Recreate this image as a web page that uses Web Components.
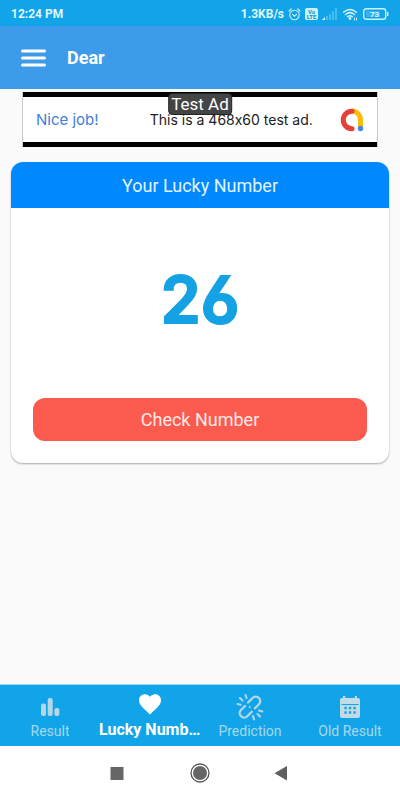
<!DOCTYPE html>
<html lang="en">
<head>
<meta charset="utf-8">
<meta name="viewport" content="width=device-width, initial-scale=1">
<title>Dear</title>
<style>
html, body { margin: 0; height: 100%; }
body { font-family: Roboto, "Liberation Sans", sans-serif; background: #fafafa; }
</style>
</head>
<body>
<lucky-app></lucky-app>

<template id="status-bar">
<style>
:host { display: flex; align-items: center; justify-content: space-between; height: 26px; padding: 2px 11px 0 11px; box-sizing: border-box; background: #12a4e8; color: #dff8ff; font-size: 12px; line-height: 16px; font-weight: 700; }
.right { display: flex; align-items: center; gap: 4px; }
svg { display: block; }
</style>
<span>12:24 PM</span>
<div class="right">
<span>1.3KB/s</span>
<svg width="13" height="13" viewBox="0 0 13 13" fill="none" stroke="#c9f3fc" stroke-linecap="round"><circle cx="6.500" cy="7" r="4.700" stroke-width="1.100"/><path d="M1 3.200 3.200 1M12 3.200 9.800 1M4.500 6.500l2 1.700 2-1.700" stroke-width="1.200"/></svg>
<svg width="13" height="12" viewBox="0 0 13 12"><rect width="13" height="12" rx="2" fill="#c9f3fc"/><g fill="#1693c8" font-family="Roboto, sans-serif" font-weight="700" font-size="6" text-anchor="middle"><text x="6.500" y="5.500">Vo</text><text x="6.500" y="11">LTE</text></g></svg>
<svg width="16" height="12" viewBox="0 0 16 12"><path d="M0 12 3 9v3z" fill="#dff8ff"/><path d="M4 8h2v4H4zM7 6h2v6H7zM10 3h2v9h-2zM13 0h2v12h-2z" fill="#45bcee"/></svg>
<svg width="17" height="13" viewBox="0 0 17 13" fill="none" stroke="#c9f3fc" stroke-width="1.500" stroke-linecap="round"><path d="M1.500 4.200q6.500-5.500 13 0M3.500 6.500q4.500-3.800 9 0M5.700 8.600q2.300-1.800 4.600 0"/><circle cx="8" cy="10.500" r=".7" fill="#c9f3fc"/><path d="M12.500 10v2M14.500 10v2" stroke-width="1"/></svg>
<svg width="26" height="12" viewBox="0 0 26 12"><rect x=".7" y=".7" width="22" height="10.600" rx="2.500" fill="none" stroke="#c9f3fc" stroke-width="1.400"/><path d="M3 3h14v6H3z" fill="#38b2e8"/><path d="M24.700 4v4" stroke="#c9f3fc" stroke-width="1.500"/><text x="11.500" y="9" font-family="Roboto, sans-serif" font-size="8" font-weight="700" fill="#dff8ff" text-anchor="middle">73</text></svg>
</div>
</template>

<template id="app-bar">
<style>
:host { display: flex; align-items: center; gap: 20px; height: 63px; padding: 0 20px; box-sizing: border-box; background: #3e9bea; color: #fff; }
button { border: 0; padding: 0; background: none; display: block; }
svg { display: block; }
h1 { margin: 0; font-size: 18px; line-height: 24px; font-weight: 700; }
</style>
<button type="button" aria-label="Menu"><svg width="27" height="20" viewBox="0 0 27 20" stroke="#fff" stroke-width="3" stroke-linecap="round"><path d="M2.500 3h22M2.500 10h22M2.500 17h22"/></svg></button>
<h1><slot></slot></h1>
</template>

<template id="ad-banner">
<style>
:host { display: flex; position: relative; align-items: center; justify-content: space-between; height: 55px; margin: 3px 22px 0; padding: 0 13px; box-sizing: border-box; border: 1px solid #ccc; border-width: 0 1px; background: linear-gradient(#000 5px, #fff 5px, #fff 50px, #000 50px); font-family: Inter, Roboto, sans-serif; font-feature-settings: "calt" 0; font-size: 14px; line-height: 20px; color: #222; }
a { color: #4280d8; text-decoration: none; font-size: 15px; }
.tag { position: absolute; top: 1px; left: 50%; transform: translateX(-50%); padding: 0 2px; border-radius: 4px; border: 1px solid #222; background: #444; color: #fff; font-family: Roboto, sans-serif; font-size: 17px; line-height: 20px; white-space: nowrap; }
.text { margin-left: 24px; }
svg { display: block; }
</style>
<a href="#">Nice job!</a>
<span class="text">This is a 468x60 test ad.</span>
<svg width="24" height="24" viewBox="0 0 24 24" fill="none" stroke-width="5"><path d="M12 3a9 9 0 0 1 8.500 9v8" stroke="#fbbc04"/><path d="M12 3.200a8.600 8.600 0 0 0 0 17.500" stroke="#e34234" stroke-linecap="round"/><circle cx="20.500" cy="20.500" r="2.700" fill="#4285f4"/></svg>
<span class="tag">Test Ad</span>
</template>

<template id="lucky-card">
<style>
:host { display: block; margin: 15px 11px 0; border-radius: 12px; overflow: hidden; background: #fff; box-shadow: 0 1px 2px #0005; }
h2 { margin: 0; background: #0088fe; color: #e2f5ff; font-size: 18px; line-height: 48px; height: 46px; font-weight: 400; text-align: center; }
output { display: block; padding: 45px 0 51px; text-align: center; color: #14a2e4; font: 600 64px/94px Inter, Roboto, sans-serif; font-feature-settings: "ss01" 1; -webkit-text-stroke: 2px #14a2e4; stroke-linejoin: round; }
.action { padding: 0 22px 22px; }
</style>
<h2>Your Lucky Number</h2>
<output>26</output>
<div class="action"><slot></slot></div>
</template>

<template id="action-button">
<style>
:host { display: block; }
button { display: block; width: 100%; height: 43px; border: 0; border-radius: 12px; background: #fb5a4f; color: #ffe9e5; font: 400 18px/24px Roboto, sans-serif; }
</style>
<button type="button"><slot></slot></button>
</template>

<template id="tab-bar">
<style>
:host { display: grid; grid-template-columns: repeat(4, minmax(0, 1fr)); height: 62px; background: #12a4e8; border-top: 1px solid #8fd6f4; box-sizing: border-box; }
</style>
<slot></slot>
</template>

<template id="tab-item">
<style>
:host { display: block; color: #a5d8ef; }
:host([active]) { color: #fff; }
a { display: flex; flex-direction: column; align-items: center; padding-top: 8px; color: inherit; text-decoration: none; font-size: 14px; line-height: 20px; }
.icon { height: 28px; display: flex; align-items: center; }
.label { white-space: nowrap; max-width: calc(100% + 2px); overflow: hidden; text-overflow: ellipsis; }
:host([active]) a { font-size: 16px; font-weight: 700; padding-top: 5px; line-height: 24px; }
</style>
<a href="#"><span class="icon"><slot name="icon"></slot></span><span class="label"><slot></slot></span></a>
</template>

<template id="system-nav">
<style>
:host { display: flex; align-items: center; justify-content: center; gap: 60px; height: 54px; background: #fff; }
button { display: block; border: 0; padding: 0; background: none; }
svg { display: block; }
</style>
<button type="button" aria-label="Recent apps"><svg width="24" height="24" viewBox="0 0 24 24"><path d="M5.500 6h13v13h-13z" fill="#666"/></svg></button>
<button type="button" aria-label="Home"><svg width="22" height="22" viewBox="0 0 22 22"><circle cx="11" cy="11" r="9" fill="none" stroke="#555" stroke-width="1.300"/><circle cx="11" cy="11" r="7" fill="#666"/></svg></button>
<button type="button" aria-label="Back"><svg width="24" height="24" viewBox="0 0 24 24"><path d="M3.500 12.200 16 5v14.500z" fill="#5f5f5f"/></svg></button>
</template>

<template id="lucky-app">
<style>
:host { display: flex; flex-direction: column; min-height: 100vh; }
main { flex: 1; }
svg { display: block; }
</style>
<status-bar></status-bar>
<app-bar>Dear</app-bar>
<main>
<ad-banner></ad-banner>
<lucky-card><action-button>Check Number</action-button></lucky-card>
</main>
<tab-bar>
<tab-item>Result<svg slot="icon" width="24" height="24" viewBox="0 0 24 24" fill="#b4d7e8"><rect x="3" y="8.500" width="5" height="12.500" rx="2"/><rect x="9.700" y="3" width="5" height="18" rx="2"/><rect x="16.400" y="13" width="5" height="8" rx="2"/></svg></tab-item>
<tab-item active>Lucky Number<svg slot="icon" width="24" height="24" viewBox="0 0 24 24" fill="#fff"><path d="M12 22.500 10.500 21C4.500 15.500 1 12.300 1 8.200 1 4.900 3.600 2.300 6.900 2.300c2 0 3.900.9 5.100 2.500 1.200-1.600 3.100-2.500 5.100-2.500C20.400 2.300 23 4.900 23 8.200c0 4.100-3.500 7.300-9.500 12.800z"/></svg></tab-item>
<tab-item>Prediction<svg slot="icon" width="28" height="28" viewBox="0 0 28 28" fill="none" stroke="#b4d7e8" stroke-width="2.300" stroke-linecap="round" stroke-linejoin="round"><path d="m12 9.500 4.500-4.500a4.400 4.400 0 0 1 6.500 6.200l-4 4M9 13l-4 4a4.400 4.400 0 0 0 6.300 6.200l4.500-4.500"/><path d="M13.700 14v.1M9.500 2l1 3M4 5l2.500 2.500M1.500 11l3 .8M17 23l1 3.500M21.500 21l2.500 2.500M23 17.500l3.300 1" stroke-width="2.100"/></svg></tab-item>
<tab-item>Old Result<svg slot="icon" width="24" height="28" viewBox="0 0 24 28"><path fill="#c2dbe7" d="M5 3h2.200v2h9.600V3H19v2h1q2 0 2 2v16q0 2-2 2H4q-2 0-2-2V7q0-2 2-2h1z"/><path stroke="#12a4e8" stroke-width="2.300" stroke-dasharray="2.300 2.200" d="M6.400 15h12M6.400 19.500h12"/><path stroke="#12a4e8" d="M3.500 11.500h17"/></svg></tab-item>
</tab-bar>
<system-nav></system-nav>
</template>

<script>
function define(name) {
  customElements.define(name, class extends HTMLElement {
    constructor() {
      super();
      this.attachShadow({ mode: "open" }).append(document.getElementById(name).content.cloneNode(true));
    }
  });
}
["status-bar", "app-bar", "ad-banner", "action-button", "lucky-card", "tab-item", "tab-bar", "system-nav", "lucky-app"].forEach(define);
</script>
</body>
</html>
